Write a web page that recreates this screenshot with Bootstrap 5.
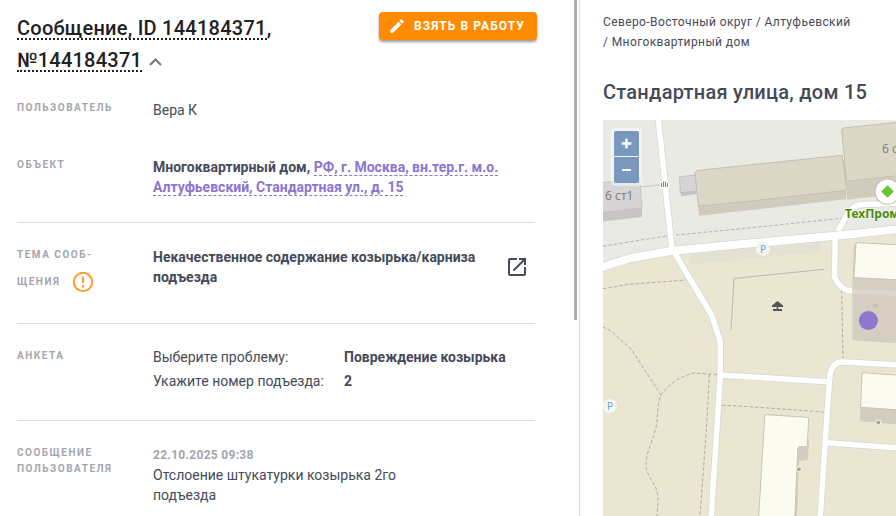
<!DOCTYPE html>
<html lang="ru">
<head>
<meta charset="utf-8">
<meta name="viewport" content="width=device-width, initial-scale=1">
<title>Сообщение, ID 144184371</title>
<link href="https://cdn.jsdelivr.net/npm/bootstrap@5.3.0/dist/css/bootstrap.min.css" rel="stylesheet">
<style>
body { font-family: Roboto, "Liberation Sans", sans-serif; font-size: 14px; line-height: 20px; color: #454a59; background: #fff; }
.split { display: grid; grid-template-columns: 580fr 316fr; height: 100vh; overflow: hidden; }
.pane-message { border-right: 1px solid #dcdcde; overflow: hidden; }
.pane-body { padding: 12px 37px 24px 17px; min-width: 0; }
.scroll-thumb { width: 3px; height: 62%; background: #adaeb4; margin-right: 2px; }
.msg-title { font-size: 20px; line-height: 32px; font-weight: 500; letter-spacing: .0125em; color: #212121; max-width: 272px; margin-bottom: 24px; }
.msg-title abbr { text-decoration: none; border-bottom: 2px dotted #212121; line-height: 20px; display: inline-block; height: 22px; cursor: help; }
.icon-btn { border: 0; background: none; padding: 0; line-height: 0; color: inherit; }
.take-btn { --bs-btn-color: #fff; --bs-btn-bg: #ff8c00; --bs-btn-border-color: #ff8c00; --bs-btn-hover-color: #fff; --bs-btn-hover-bg: #f08400; --bs-btn-hover-border-color: #f08400; height: 28px; padding: 0 12px 0 9px; border: 0; border-radius: 4px; font-size: 12px; line-height: 28px; font-weight: 700; letter-spacing: .09em; box-shadow: 0 2px 3px rgba(0,0,0,.4); }
.field-row { display: grid; grid-template-columns: 136px 1fr; margin-right: 2px; }
.field-name { font-size: 10px; line-height: 16px; font-weight: 700; letter-spacing: .15em; color: #a3a6ae; text-transform: uppercase; margin: 0; }
.field-value { margin: 0; }
.field-row.object-row { padding: 33px 0 25px; }
.section { border-top: 1px solid #dedede; margin-right: 2px; padding: 24px 0 30px; }
.section .field-row { margin-right: 0; }
.strong-text { font-weight: 700; }
.addr { color: #8b76cf; text-decoration: none; border-bottom: 1px dashed #8b76cf; }
.topic { max-width: 340px; }
.answers { display: grid; grid-template-columns: 1fr 1fr; row-gap: 6px; line-height: 18px; }
.when { font-size: 12px; font-weight: 700; letter-spacing: .025em; color: #a3a6ae; }
.message-text { max-width: 280px; }
.pane-object { display: flex; flex-direction: column; padding: 12px 0 0 23px; min-width: 0; }
.crumbs { font-size: 12px; line-height: 20px; letter-spacing: .033em; max-width: 252px; margin-bottom: 26px; }
.crumbs a { color: inherit; text-decoration: none; }
.obj-title { font-size: 20px; line-height: 28px; font-weight: 500; letter-spacing: .0125em; margin-bottom: 14px; white-space: nowrap; }
.map-box { flex: 1 1 0; min-height: 0; overflow: hidden; background: #ebe6d2; }
.map-box > svg { display: block; width: 100%; height: 100%; }
.zoom-ctl { position: absolute; top: 8px; left: 8px; padding: 3px; gap: 1px; background: rgba(255,255,255,.45); border-radius: 4px; }
.zoom-ctl button { width: 25px; height: 26px; padding: 0; border: 0; background: #7a97bd; color: #fff; line-height: 0; }
.zoom-ctl button:first-child { border-radius: 2px 2px 0 0; height: 25px; }
.zoom-ctl button:last-child { border-radius: 0 0 2px 2px; }
.map-label { font-family: "Noto Sans", "Open Sans", sans-serif; font-size: 12px; fill: #85817d; }
.map-place { font-family: "Noto Sans", "Open Sans", sans-serif; font-size: 12px; font-weight: 700; fill: #488a0c; stroke: #fff; stroke-width: 1px; paint-order: stroke; }
.map-parking { font-family: "Noto Sans", sans-serif; font-size: 10px; fill: #55a9e8; text-anchor: middle; }
</style>
<script src="https://cdn.jsdelivr.net/npm/bootstrap@5.3.0/dist/js/bootstrap.bundle.min.js"></script>
</head>
<body>
<div class="split">
  <main class="pane-message d-flex">
    <div class="pane-body flex-grow-1">
      <header class="d-flex justify-content-between align-items-start">
        <h1 class="msg-title"><abbr title="Номер сообщения">Сообщение, ID 144184371</abbr>, <abbr title="Внешний номер">№144184371</abbr>
          <button type="button" class="icon-btn" aria-label="Свернуть"><svg width="16" height="10" viewBox="-2 0 16 10" fill="none" stroke="#75777b" stroke-width="2"><path d="M1 8 6.500 2.500 12 8"/></svg></button></h1>
        <button type="button" class="btn take-btn d-flex align-items-center gap-2 text-uppercase text-nowrap"><svg width="18" height="18" viewBox="0 0 24 24" fill="currentColor"><path d="M3 17.25V21h3.75L17.81 9.94l-3.75-3.75L3 17.25zM20.71 7.04a1 1 0 0 0 0-1.41l-2.34-2.34a1 1 0 0 0-1.41 0l-1.83 1.83 3.75 3.75 1.83-1.83z"/></svg><span>Взять в работу</span></button>
      </header>
      <dl class="field-row mb-0">
        <dt class="field-name">Пользователь</dt>
        <dd class="field-value">Вера К</dd>
      </dl>
      <dl class="field-row object-row mb-0">
        <dt class="field-name pt-1">Объект</dt>
        <dd class="field-value strong-text pt-1">Многоквартирный дом, <a href="#" class="addr">РФ, г. Москва, вн.тер.г. м.о. Алтуфьевский, Стандартная ул., д. 15</a></dd>
      </dl>
      <section class="section">
        <dl class="field-row mb-0">
          <dt class="field-name">Тема сооб-<br><span class="d-inline-flex align-items-center gap-2 mt-2">щения <svg width="22" height="22" viewBox="0 0 22 22" fill="none" class="ms-1" role="img" aria-label="Внимание"><circle cx="11" cy="11" r="9.2" stroke="#ff9c34" stroke-width="2"/><path d="M11 5.5v6.5M11 14v2.4" stroke="#ff9c34" stroke-width="2.2"/></svg></span></dt>
          <dd class="field-value d-flex justify-content-between align-items-center strong-text align-self-start">
            <span class="topic">Некачественное содержание козырька/карниза подъезда</span>
            <button type="button" class="icon-btn me-1" aria-label="Открыть"><svg width="28" height="24" viewBox="0 0 24 24" fill="currentColor"><path d="M19 19H5V5h7V3H5a2 2 0 0 0-2 2v14a2 2 0 0 0 2 2h14a2 2 0 0 0 2-2v-7h-2v7zM14 3v2h3.59l-9.83 9.83 1.41 1.41L19 6.41V10h2V3h-7z"/></svg></button>
          </dd>
        </dl>
      </section>
      <section class="section">
        <dl class="field-row mb-0">
          <dt class="field-name">Анкета</dt>
          <dd class="field-value answers">
            <span>Выберите проблему:</span><span class="strong-text">Повреждение козырька</span>
            <span>Укажите номер подъезда:</span><span class="strong-text">2</span>
          </dd>
        </dl>
      </section>
      <section class="section">
        <dl class="field-row mb-0">
          <dt class="field-name">Сообщение пользователя</dt>
          <dd class="field-value"><div class="when">22.10.2025 09:38</div><div class="message-text">Отслоение штукатурки козырька 2го подъезда</div></dd>
        </dl>
      </section>
    </div>
    <div class="scroll-thumb flex-shrink-0"></div>
  </main>
  <aside class="pane-object">
    <nav class="crumbs" aria-label="Расположение"><a href="#">Северо-Восточный округ</a> / <a href="#">Алтуфьевский</a> / <a href="#">Многоквартирный дом</a></nav>
    <h2 class="obj-title">Стандартная улица, дом 15</h2>
    <div class="map-box position-relative">
      <svg viewBox="603 120 293 396" preserveAspectRatio="xMinYMin slice" role="img" aria-label="Карта">
        <path fill="#ebe6d2" d="M603 120H1000V600H603z"/>
        <path fill="#e9eae3" d="M603 120H896V229L836 236 746 244 671 251 631 258 603 267z"/>
        <path fill="#e2e1d2" d="M689 250 819 241.500 820 251.500 691 264.500z"/>
        <!-- footpaths -->
        <g fill="none" stroke="#b0ad9b" stroke-width="1" stroke-dasharray="3.500 2">
          <g stroke="#b4b4b0"><path d="M603 246.300 649 238.700 669 235.700M676 235 746 228.300 841 218.300"/></g>
          <path d="M603 288.700 629 284.300 686 280"/>
          <path d="M603 327 611 331 631 349 646 372 661 395"/>
          <path d="M717 374.500 694 373Q673 378 661 395C656 406 659 420 655 431C651 445 645 456 646 468C649 480 659 486 658 501L657 516"/>
          <path d="M709.500 374 706 435 700 516M722 405.300 746 406.500 824 412M841.700 290 843 358"/>
        </g>
        <path fill="none" stroke="#bcb9ad" d="M731 330.500 734 278.500 824 269.300"/>
        <path stroke="#c6c5c0" d="M640 187 659 185"/>
        <!-- roads: casing, then surface -->
        <g fill="none" stroke-linejoin="round">
          <g stroke="#d5d6d4">
            <path stroke-width="9.500" d="M600 267.500 631 258 671 251 746 243.800 836 235.700 900 229"/>
            <path stroke-width="7" d="M658 116 672 250M674 252 711.500 315 720.300 341.700V375L711 520M720 375 828 381.700M820 520 829.300 381.700 830 375Q832 361 844 362L900 365M826 442.700 900 448M835.300 236 834.500 277Q840 290 852 291M838 231 848 213Q853 204 866 204.500L900 203"/>
          </g>
          <g stroke="#fff">
            <path stroke-width="8" d="M600 267.500 631 258 671 251 746 243.800 836 235.700 900 229"/>
            <path stroke-width="5.600" d="M658 116 672 250M674 252 711.500 315 720.300 341.700V375L711 520M720 375 828 381.700M820 520 829.300 381.700 830 375Q832 361 844 362L900 365M826 442.700 900 448M835.300 236 834.500 277Q840 290 852 291M838 231 848 213Q853 204 866 204.500L900 203"/>
          </g>
        </g>
        <!-- buildings -->
        <g stroke-linejoin="round">
          <path fill="#c7c5c4" d="M603 210 642 206V217L603 221.500z"/>
          <path fill="#d6d4d4" stroke="#c4c2c1" stroke-width=".8" d="M602 182.700 639.700 178.300 642 207.700 602 212.300z"/>
          <path fill="#c4c2c1" d="M680 177 696 190 697 194 681 196.300z"/>
          <path fill="#d6d4d4" stroke="#bdbbb9" stroke-width=".8" d="M679.500 176.700 695.300 175 697 191 680.300 192.700z"/>
          <path fill="#d1cbbd" d="M695 173 846 160V199.300L746 210.500 699 215.700z"/>
          <path fill="#dcd8c7" stroke="#c6c0ae" stroke-width="1" d="M695 172 697 170.500 842 155.300 846.500 190.300 746 201.500 698.700 206z"/>
          <path fill="#d1cbbd" d="M842 129 896 160V194L847 199.700z"/>
          <path fill="#dcd8c7" stroke="#c6c0ae" stroke-width="1" d="M841.700 130 843 128 900 122V175.500L846.700 181.300z"/>
          <path fill="#d6cec1" d="M854 243 900 270V343.500L854 340.500Q852.500 340 852.500 338.500V278z"/>
          <path fill="none" stroke="#dcd6cc" stroke-width="5" d="M853 291.500 900 293.500"/>
          <path fill="#fbfbf2" stroke="#cbc5b5" d="M856 244Q856 242.500 858 242.700L900 245V280L854 277.500z"/>
          <path fill="#d3ccbf" d="M860.500 400 900 405V424.500L861 421.300Q860 421 860 420z"/>
          <path fill="#fbfbf2" stroke="#cbc5b5" d="M862 374Q862 372.700 864 372.800L900 375.300V410L860.500 407.300z"/>
          <path fill="#d3ccbf" d="M797 446 809 440 808 460 799 461 797 516H794z"/>
          <path fill="#fbfbf2" stroke="#cbc5b5" d="M764.700 416.500Q765 414.500 767 414.700L807 417.300Q809 417.500 808.700 419L807.300 445.500Q807 447 805 446.700L799.500 446.800Q797.700 447 797.700 449L794.700 520H758.500z"/>
        </g>
        <g stroke="#fff"><circle cx="878.300" cy="422.500" r="2.500" fill="#aaa395"/><circle cx="799" cy="469.300" r="2.500" fill="#aaa395"/></g>
        <circle cx="875.500" cy="305.500" r="2.300" fill="#c6beb2"/>
        <!-- gate -->
        <path fill="#fff" d="M660 182 664 180 669 183V188.500H660z"/>
        <path fill="none" stroke="#827d79" d="M661.500 183V187M663.500 181.500V187M665.500 181.500V187M667.500 183V187"/>
        <!-- playground -->
        <path fill="#55555b" d="M777.500 301 783 305.500V307H772V305.500zM776.700 306H778.300V309H782V311H773V309H776.700z"/>
        <circle cx="763" cy="249" r="7" fill="#f4f3ed"/><circle cx="610" cy="406" r="7" fill="#f8f6ef"/>
        <text class="map-parking" x="763" y="252.500">P</text><text class="map-parking" x="610" y="409.500">P</text>
        <text class="map-label" x="605" y="200">6 ст1</text>
        <text class="map-label" x="882" y="153">6 с</text>
        <circle cx="887.500" cy="192" r="13" fill="#9b978a" opacity=".45"/>
        <circle cx="887.500" cy="191.500" r="12" fill="#fff"/>
        <path fill="#6cc335" stroke="#6cc335" stroke-linejoin="round" d="M887.500 185.700 893.300 191.500 887.500 197.300 881.700 191.500z"/>
        <text class="map-place" x="845" y="218">ТехПром</text>
        <circle cx="868.400" cy="320.500" r="9.500" fill="#8c78cf"/>
      </svg>
      <div class="zoom-ctl d-flex flex-column">
        <button type="button" aria-label="Приблизить"><svg width="11" height="11" viewBox="0 0 11 11" stroke="#fff" stroke-width="2.500"><path d="M5.500.7v9.600M.7 5.500h9.600"/></svg></button>
        <button type="button" aria-label="Отдалить"><svg width="11" height="11" viewBox="0 0 11 11" stroke="#fff" stroke-width="2"><path d="M1 5h9"/></svg></button>
      </div>
    </div>
  </aside>
</div>
</body>
</html>
